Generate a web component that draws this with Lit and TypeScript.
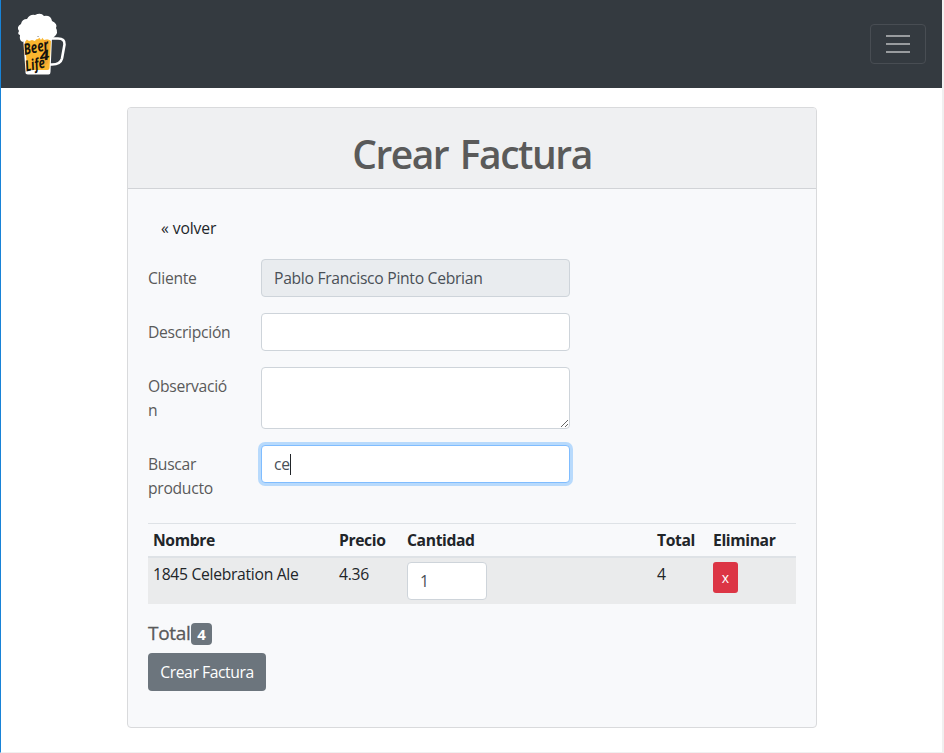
import { LitElement, html, svg, css } from "lit";
import { customElement, state } from "lit/decorators.js";

interface InvoiceLine {
  name: string;
  price: string;
  quantity: number;
  total: number;
}

@customElement("beer-logo")
class BeerLogo extends LitElement {
  static styles = css`
    :host { display: block; width: 50px; height: 64px; }
    svg { display: block; overflow: visible; }
    text { font-family: "Open Sans", sans-serif; font-style: italic; font-weight: 700; fill: #15120d; letter-spacing: 0; }
  `;

  render() {
    return svg`
      <svg width="50" height="64" viewBox="1 0 50 64">
        <path d="M34 26.500h8q7 0 6.500 6l-2.500 14q-1.500 6-10 6h-4" fill="none" stroke="#fff" stroke-width="2.600"/>
        <path d="M7 25h29l-1.500 35q0 2.500-2 2.500H12q-3 0-2.500-3z" fill="#fff"/>
        <path d="M9 30l3-4 4 2 6-1 3-3 3 4 4-1 3 2-1.500 27q0 2-2 2H13q-2 0-2-2z" fill="#fbb72f"/>
        <path d="M28 28l5 1-1 22-5 4z" fill="#e99a35" opacity=".6"/>
        <path d="M3 19q-3-4 2-7 1-5 6-5 3-5 8-4 6-3 9 1 7-1 8 5 6 3 4 7 3 5-2 9l-3 3-5-1-3-2-2 3-3-4-3 5-3-1-3 1-3-2-3 3q-4-1-3-7-3-1-1-4z" fill="#fff"/>
        <g transform="rotate(-12 20 38)">
          <text x="8" y="40.500" font-size="15.500" textLength="25" lengthAdjust="spacingAndGlyphs">Beer</text>
          <text x="22" y="50" font-size="14" textLength="10" lengthAdjust="spacingAndGlyphs">4</text>
          <text x="6" y="57" font-size="15" textLength="20" lengthAdjust="spacingAndGlyphs">Life</text>
        </g>
      </svg>`;
  }
}

@customElement("app-root")
class AppRoot extends LitElement {
  @state() private lines: InvoiceLine[] = [
    { name: "1845 Celebration Ale", price: "4.36", quantity: 1, total: 4 },
  ];

  static styles = css`
    * { box-sizing: border-box; }
    :host {
      display: block; box-sizing: border-box; height: 753px; overflow: hidden;
      border-left: 1px solid #1883d7; border-right: 2px solid #f0f0f0; border-bottom: 1px solid #f0f0f0;
      background: #fff; color: #5a5a5a;
      font: 15.7px/24px "Open Sans", "Noto Sans", sans-serif; letter-spacing: -0.3px;
    }
    .navbar {
      height: 88px; padding: 0 16px; background: #343a40;
      display: flex; align-items: center; justify-content: space-between;
    }
    .toggler {
      width: 56px; height: 40px; padding: 0; border: 1px solid #484d53; border-radius: 4px;
      background: none; display: flex; align-items: center; justify-content: center;
    }
    .toggler svg { display: block; }
    .card {
      width: 690px; height: 621px; margin: 19px 0 0 126px; overflow: hidden;
      border: 1px solid #d9dadc; border-radius: 4px; background: #f8f9fb;
    }
    .card-header {
      height: 81px; padding-top: 22px; background: #eff0f2; border-bottom: 1px solid #d1d3d7; text-align: center;
    }
    h1 { margin: 0; font-size: 39px; line-height: 48px; font-weight: 600; letter-spacing: -1.5px; word-spacing: 3px; }
    .card-body { padding: 20px; }
    .back { display: block; height: 38px; padding: 7px 13px; margin-bottom: 12px; color: #212529; letter-spacing: -0.1px; }
    .row { display: grid; grid-template-columns: 83px 309px; column-gap: 30px; margin-bottom: 16px; align-items: start; }
    label { padding-top: 7px; white-space: nowrap; }
    .control {
      display: flex; align-items: center; width: 100%; height: 38px; padding: 0 12px;
      border: 1px solid #ced4da; border-radius: 4px; background: #fff; color: #495057;
    }
    textarea.control { display: block; height: 62px; resize: both; outline: none; }
    .readonly { background: #e9ecef; }
    .focused { border-color: #80bdff; box-shadow: 0 0 0 3px #b8dafc; }
    .caret { width: 1px; height: 21px; background: #212529; }
    .table { margin-top: 23px; color: #212529; }
    .tr { display: grid; grid-template-columns: 186px 68px 250px 56px 88px; }
    .tr > * { padding: 5px; }
    .head { height: 35px; border-top: 1px solid #dee2e6; border-bottom: 2px solid #dee2e6; font-weight: 700; letter-spacing: -0.38px; }
    .head > * { padding-top: 4px; }
    .body { height: 46px; background: #eaebec; }
    .body > * { padding-top: 4px; }
    .qty { width: 80px; }
    .remove {
      display: block; width: 25px; height: 31px; padding: 0; border: 0; border-radius: 3px;
      background: #dc3545; color: #fff; font: 14px/32px "Open Sans", sans-serif;
    }
    .total { display: flex; align-items: center; height: 24px; margin: 17px 0 8px; }
    .total-label { width: 43px; font-size: 19px; font-weight: 500; -webkit-text-stroke: 0.3px #5a5a5a; }
    .badge {
      width: 21px; height: 22px; border-radius: 4px; background: #6c757d; color: #fff; margin-top: 2px;
      font-size: 15px; line-height: 22px; font-weight: 700; text-align: center;
    }
    .submit {
      display: block; width: 118px; height: 38px; padding: 0; border: 0; border-radius: 4px;
      background: #6c757d; color: #fff; font: inherit; letter-spacing: -0.43px; white-space: nowrap;
    }
  `;

  render() {
    return html`
      <nav class="navbar">
        <beer-logo></beer-logo>
        <button class="toggler" aria-label="Menu">
          <svg width="24" height="18" viewBox="0 0 24 18">
            <path d="M0 1h24M0 9h24M0 17h24" stroke="#999c9f" stroke-width="2" />
          </svg>
        </button>
      </nav>
      <main class="card">
        <header class="card-header"><h1>Crear Factura</h1></header>
        <div class="card-body">
          <a class="back">« volver</a>
          <div class="row"><label>Cliente</label><div class="control readonly">Pablo Francisco Pinto Cebrian</div></div>
          <div class="row"><label>Descripción</label><div class="control"></div></div>
          <div class="row"><label>Observació<br />n</label><textarea class="control"></textarea></div>
          <div class="row"><label>Buscar<br />producto</label><div class="control focused">ce<span class="caret"></span></div></div>
          <div class="table">
            <div class="tr head">
              <div>Nombre</div><div>Precio</div><div>Cantidad</div><div>Total</div><div>Eliminar</div>
            </div>
            ${this.lines.map((line) => html`
              <div class="tr body">
                <div>${line.name}</div>
                <div>${line.price}</div>
                <div><div class="control qty">${line.quantity}</div></div>
                <div>${line.total}</div>
                <div><button class="remove">x</button></div>
              </div>`)}
          </div>
          <div class="total"><span class="total-label">Total</span><span class="badge">4</span></div>
          <button class="submit">Crear Factura</button>
        </div>
      </main>
    `;
  }
}
